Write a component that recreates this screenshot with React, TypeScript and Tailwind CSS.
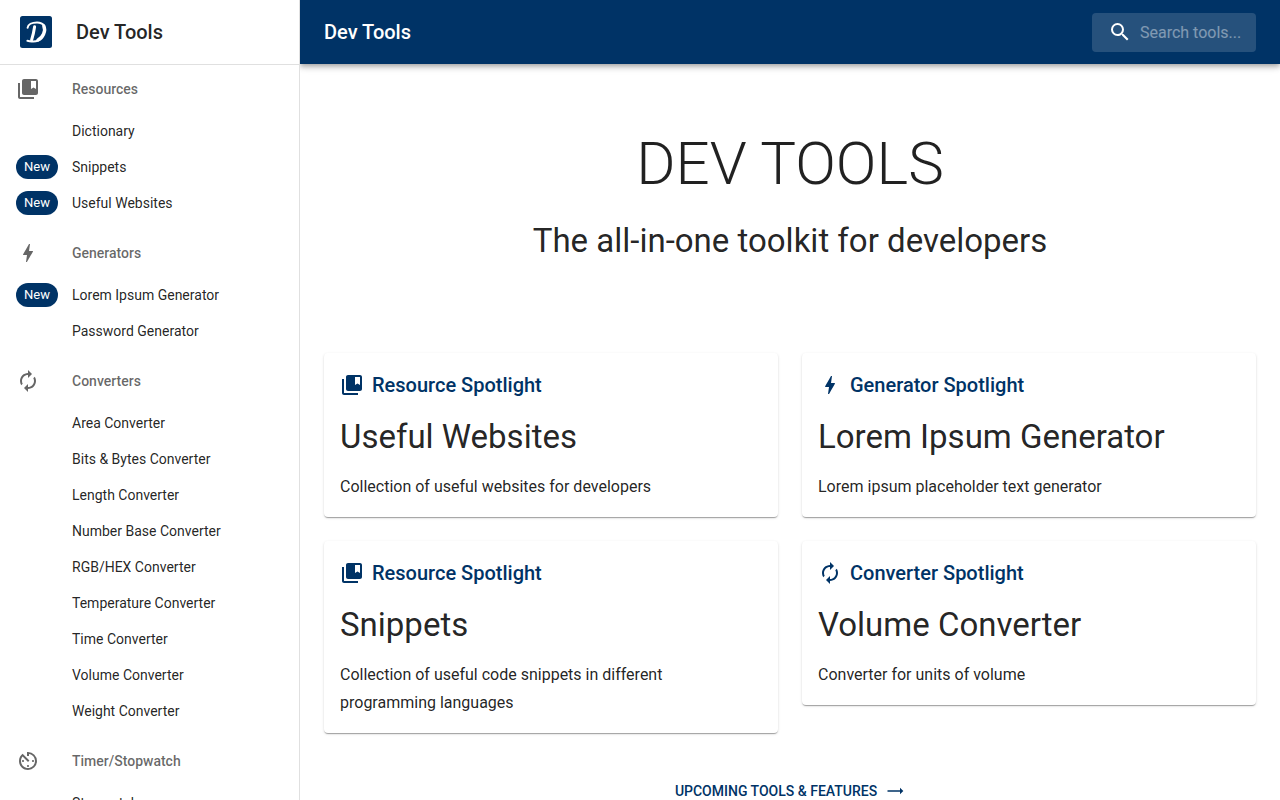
import { useId } from 'react';
import type { IconType } from 'react-icons';
import {
  MdAutorenew,
  MdAvTimer,
  MdBolt,
  MdCollectionsBookmark,
  MdSearch,
  MdTrendingFlat,
} from 'react-icons/md';

type Tool = { name: string; isNew?: boolean };
type Section = { title: string; icon: IconType; tools: Tool[] };
type Spotlight = { label: string; icon: IconType; title: string; description: string };

const sections: Section[] = [
  {
    title: 'Resources',
    icon: MdCollectionsBookmark,
    tools: [
      { name: 'Dictionary' },
      { name: 'Snippets', isNew: true },
      { name: 'Useful Websites', isNew: true },
    ],
  },
  {
    title: 'Generators',
    icon: MdBolt,
    tools: [{ name: 'Lorem Ipsum Generator', isNew: true }, { name: 'Password Generator' }],
  },
  {
    title: 'Converters',
    icon: MdAutorenew,
    tools: [
      { name: 'Area Converter' },
      { name: 'Bits & Bytes Converter' },
      { name: 'Length Converter' },
      { name: 'Number Base Converter' },
      { name: 'RGB/HEX Converter' },
      { name: 'Temperature Converter' },
      { name: 'Time Converter' },
      { name: 'Volume Converter' },
      { name: 'Weight Converter' },
    ],
  },
  {
    title: 'Timer/Stopwatch',
    icon: MdAvTimer,
    tools: [{ name: 'Stopwatch' }],
  },
];

const spotlights: Spotlight[] = [
  {
    label: 'Resource Spotlight',
    icon: MdCollectionsBookmark,
    title: 'Useful Websites',
    description: 'Collection of useful websites for developers',
  },
  {
    label: 'Generator Spotlight',
    icon: MdBolt,
    title: 'Lorem Ipsum Generator',
    description: 'Lorem ipsum placeholder text generator',
  },
  {
    label: 'Resource Spotlight',
    icon: MdCollectionsBookmark,
    title: 'Snippets',
    description: 'Collection of useful code snippets in different programming languages',
  },
  {
    label: 'Converter Spotlight',
    icon: MdAutorenew,
    title: 'Volume Converter',
    description: 'Converter for units of volume',
  },
];

function Logo() {
  return (
    <svg viewBox="0 0 32 32" className="size-8" aria-hidden="true">
      <rect width="32" height="32" rx="2.5" fill="#003366" />
      <g fill="none" stroke="#fff" strokeLinecap="round" strokeLinejoin="round">
        <path d="M14.6 10.8C14 15 12.9 20 11.6 24" strokeWidth="3" />
        <path d="M7.6 11.8C7.8 8.4 12 6.4 17 6.4C20.4 6.4 22.8 7.6 24 9.6" strokeWidth="2" />
        <path d="M23.8 10C26.2 14.8 22.8 21.8 18 24" strokeWidth="3.4" />
        <path d="M18 24.6C14 26.4 11 25.2 7.4 24.8" strokeWidth="2" />
      </g>
    </svg>
  );
}

function SidebarSection({ section }: { section: Section }) {
  const id = useId();
  const Icon = section.icon;
  return (
    <section aria-labelledby={id} className="pb-2">
      <div className="flex h-12 items-center px-4 text-black/60">
        <span className="w-14 shrink-0">
          <Icon className="size-6" />
        </span>
        <h2 id={id} className="text-sm font-medium">
          {section.title}
        </h2>
      </div>
      <ul>
        {section.tools.map((tool) => (
          <li key={tool.name}>
            <a href="#" className="flex h-9 items-center px-4 text-sm hover:bg-black/5">
              <span className="flex w-14 shrink-0">
                {tool.isNew && (
                  <span className="flex h-6 items-center rounded-full bg-[#003366] px-2 text-[13px] text-white">
                    New
                  </span>
                )}
              </span>
              {tool.name}
            </a>
          </li>
        ))}
      </ul>
    </section>
  );
}

function SpotlightCard({ spotlight }: { spotlight: Spotlight }) {
  const Icon = spotlight.icon;
  return (
    <a
      href="#"
      className="block rounded-sm bg-white p-4 shadow-[0_2px_1px_-1px_rgba(0,0,0,0.2),0_1px_1px_0_rgba(0,0,0,0.14),0_1px_3px_0_rgba(0,0,0,0.12)]"
    >
      <div className="flex items-center gap-2 text-xl leading-8 font-medium text-[#003366]">
        <Icon className="size-6" />
        {spotlight.label}
      </div>
      <h3 className="mt-4 mb-4 text-[33px] leading-10">{spotlight.title}</h3>
      <p className="text-base leading-7">{spotlight.description}</p>
    </a>
  );
}

export default function App() {
  return (
    <div className="flex min-h-screen bg-white font-[Roboto,sans-serif] text-black/87">
      <aside className="sticky top-0 z-20 h-screen w-[300px] shrink-0 overflow-y-auto border-r border-black/12 bg-white [scrollbar-width:none]">
        <a
          href="#"
          className="flex h-[65px] items-center gap-6 border-b border-black/12 px-5 text-xl font-medium"
        >
          <Logo />
          Dev Tools
        </a>
        <nav aria-label="Tools">
          {sections.map((section) => (
            <SidebarSection key={section.title} section={section} />
          ))}
        </nav>
      </aside>

      <div className="min-w-0 flex-1">
        <header className="sticky top-0 z-10 flex h-16 items-center justify-between bg-[#003366] px-6 text-white shadow-[0_2px_4px_-1px_rgba(0,0,0,0.2),0_4px_5px_0_rgba(0,0,0,0.14),0_1px_10px_0_rgba(0,0,0,0.12)]">
          <div className="text-xl font-medium">Dev Tools</div>
          <label className="flex h-[39px] w-[164px] items-center rounded-sm bg-white/15 pr-2 pl-4">
            <MdSearch className="size-6 shrink-0" />
            <input
              type="text"
              aria-label="Search tools"
              placeholder="Search tools..."
              className="ml-2 h-[19px] w-full min-w-0 bg-transparent text-base leading-[19px] outline-none placeholder:text-white/42"
            />
          </label>
        </header>

        <main className="px-6 pt-16 pb-16">
          <div className="text-center">
            <h1 className="text-6xl leading-[72px] font-light">DEV TOOLS</h1>
            <p className="mt-5 text-[33px] leading-[42px]">The all-in-one toolkit for developers</p>
          </div>

          <div className="mt-[91px] grid grid-cols-2 items-start gap-6">
            {spotlights.map((spotlight) => (
              <SpotlightCard key={spotlight.title} spotlight={spotlight} />
            ))}
          </div>

          <div className="mt-10 flex justify-center">
            <a
              href="#"
              className="flex h-9 items-center gap-2 px-2 text-sm font-medium text-[#003366] uppercase"
            >
              Upcoming Tools &amp; Features
              <MdTrendingFlat className="size-5" />
            </a>
          </div>
        </main>
      </div>
    </div>
  );
}
